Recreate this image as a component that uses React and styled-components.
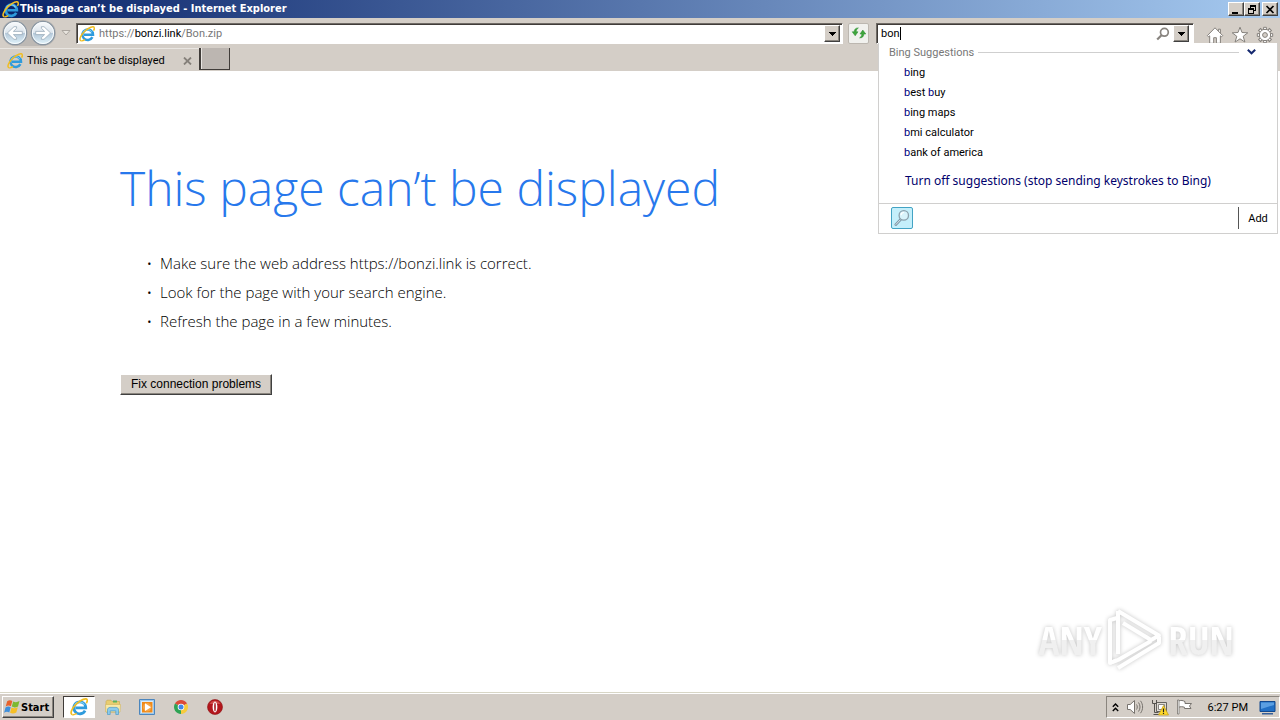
import React, { useEffect, useRef } from 'react';
import styled, { createGlobalStyle, css } from 'styled-components';

const uiFont = 'Roboto, "DejaVu Sans Condensed", sans-serif';
const linkFont = '"Noto Sans", "DejaVu Sans Condensed", sans-serif';
const boldFont = '"DejaVu Sans Condensed", "DejaVu Sans", sans-serif';
const pageFont = '"Open Sans", "Noto Sans", sans-serif';
const face = '#d4cec7';

const suggestions = ['bing', 'best buy', 'bing maps', 'bmi calculator', 'bank of america'];

const tips = [
  'Make sure the web address https://bonzi.link is correct.',
  'Look for the page with your search engine.',
  'Refresh the page in a few minutes.',
];

const GlobalStyle = createGlobalStyle`
  * {
    box-sizing: border-box;
  }

  body {
    margin: 0;
    background: #fff;
    font-family: ${uiFont};
    font-size: 11px;
    color: #000;
  }

  button,
  input {
    margin: 0;
    padding: 0;
    border: 0;
    background: none;
    font: inherit;
    color: inherit;
  }

  svg {
    display: block;
    flex: none;
  }
`;

const raised = css`
  background: ${face};
  border: 1px solid;
  border-color: #fff #404040 #404040 #fff;
  box-shadow: inset -1px -1px 0 #8a857e;
`;

const InternetExplorerIcon = ({ size = 16 }) => (
  <svg width={size} height={size} viewBox="0 0 16 16" fill="none" aria-hidden="true">
    <path
      d="M13.400 11.200A5.300 5.300 0 1 1 14 8.700H5"
      stroke="#2f9bdc"
      strokeWidth="2.500"
    />
    <path d="M4 7.200A4.800 4.800 0 0 1 12.800 6" stroke="#8ad6f7" strokeWidth="1" />
    <path
      d="M2.300 14.800C-.6 14.400 1.600 8.900 6 5 10 1.400 14.400-.3 15.200 1.500c.4.800 0 2-.7 3.100"
      stroke="#f0bd22"
      strokeWidth="1.500"
    />
    <path d="M2.300 14.800c1 .2 2.300-.3 3.600-1.100" stroke="#f0bd22" strokeWidth="1.400" />
  </svg>
);

const ArrowButtonIcon = ({ forward }) => (
  <svg width="26" height="26" viewBox="0 0 26 26" aria-hidden="true">
    <defs>
      <linearGradient id={forward ? 'orbForward' : 'orbBack'} x1="0" y1="0" x2="0" y2="1">
        <stop offset="0" stopColor="#fbfcfd" />
        <stop offset=".48" stopColor="#dbe4ec" />
        <stop offset=".52" stopColor="#b4c8d9" />
        <stop offset="1" stopColor="#e3f5fc" />
      </linearGradient>
    </defs>
    <circle
      cx="13"
      cy="13"
      r="11.7"
      fill={`url(#${forward ? 'orbForward' : 'orbBack'})`}
      stroke="#8995a1"
      strokeWidth="1.2"
    />
    <circle cx="13" cy="13" r="10.6" fill="none" stroke="#f7fbfd" />
    <path
      d="M5.4 13l6.6-6.3h2.6v1.6l-3.2 3.1h8.9v3.2h-8.9l3.2 3.1v1.6H12z"
      fill="#fff"
      stroke="#9aacba"
      strokeWidth=".8"
      transform={forward ? 'matrix(-1 0 0 1 26 0)' : undefined}
    />
  </svg>
);

const DownArrow = () => (
  <svg width="7" height="4" viewBox="0 0 7 4" shapeRendering="crispEdges" aria-hidden="true">
    <path d="M0 0h7v1H6v1H5v1H4v1H3V3H2V2H1V1H0z" fill="#000" />
  </svg>
);

const RefreshIcon = () => (
  <svg width="16" height="16" viewBox="0 0 16 16" fill="#3fa63c" stroke="#258a2c" strokeWidth=".5" aria-hidden="true">
    <path d="M1.200 6.800L4.200 10.800 7 6.800H5.200c0-1.700.6-2.800 2.200-3.900-2.600-.1-4.100 1.200-4.300 3.900z" />
    <path d="M14.800 9L11.800 5 9 9h1.800c0 1.700-.6 2.800-2.200 3.900 2.600.1 4.100-1.200 4.300-3.900z" />
  </svg>
);

const SearchIcon = () => (
  <svg width="14" height="14" viewBox="0 0 14 14" fill="none" stroke="#88847f" aria-hidden="true">
    <circle cx="8.4" cy="5.3" r="3.9" strokeWidth="1.7" />
    <path d="M5.5 8.2L1.2 12.6" strokeWidth="2.2" />
  </svg>
);

const HomeIcon = () => (
  <svg width="18" height="18" viewBox="0 0 18 18" fill="#fff" stroke="#85817c" aria-hidden="true">
    <path d="M12.4 3.2h2v4h-2z" />
    <path d="M9 1.8L1.4 9.6l1.2 1.2 1.1-1v7.5h4v-5.6h2.7v5.6h4V9.8l1.1 1 1.2-1.2z" />
  </svg>
);

const StarIcon = () => (
  <svg width="18" height="18" viewBox="0 0 18 18" fill="#fff" stroke="#85817c" aria-hidden="true">
    <path d="M9 1.2l2 5.3 5.8.3-4.6 3.5 1.7 5.7L9 12.8 4.1 16l1.7-5.7L1.2 6.8l5.8-.3z" />
  </svg>
);

const gearAngles = [0, 45, 90, 135, 180, 225, 270, 315];

const GearIcon = () => (
  <svg width="18" height="18" viewBox="0 0 18 18" fill="#fff" stroke="#85817c" aria-hidden="true">
    {gearAngles.map(angle => (
      <path key={angle} d="M7.6 4V1.3h2.8V4" transform={`rotate(${angle} 9 9)`} />
    ))}
    <circle cx="9" cy="9" r="5.6" />
    <circle cx="9" cy="9" r="5" stroke="none" />
    <circle cx="9" cy="9" r="2.4" fill={face} />
  </svg>
);

const MagnifierIcon = () => (
  <svg width="18" height="18" viewBox="0 0 18 18" fill="none" aria-hidden="true">
    <path d="M7.7 10.4L2.8 15.6" stroke="#7f99a8" strokeWidth="2.8" strokeLinecap="round" />
    <path d="M7.5 10.6L3 15.4" stroke="#d9e6ec" strokeWidth="1" strokeLinecap="round" />
    <circle cx="10.8" cy="6.4" r="4.7" fill="#d8f3fb" stroke="#8ba0ad" strokeWidth="1.3" />
    <path d="M8 6.2a3 3 0 0 1 3-2.7" stroke="#fff" strokeWidth="1.2" />
  </svg>
);

const WindowsFlag = () => (
  <svg width="17" height="16" viewBox="0 0 17 16" aria-hidden="true">
    <path d="M3.2 2.2C5 1 6.700 1 8.300 2L6.900 7.300C5.200 6.300 3.500 6.400 1.700 7.500z" fill="#e8622b" />
    <path d="M9.200 2.400c1.900 1.100 3.900 1 6.300-.3l-1.500 5.300c-2.200 1.300-4.300 1.300-6.200.2z" fill="#7db92f" />
    <path d="M1.500 8.400c1.800-1.100 3.500-1.200 5.200-.2l-1.400 5.300c-1.700-1-3.400-.9-5.200.2z" fill="#3f8fdb" />
    <path d="M7.500 8.600c1.900 1.100 4 1 6.300-.3l-1.500 5.300c-2.300 1.300-4.300 1.300-6.200.2z" fill="#f6bf25" />
  </svg>
);

const FolderIcon = () => (
  <svg width="18" height="18" viewBox="0 0 18 18" aria-hidden="true">
    <path d="M2 3.500l1-1.300h4l1 1.300h7.500V14H2z" fill="#e9cd70" stroke="#c9a847" strokeWidth=".6" />
    <path d="M9 2.500h4v2H9z" fill="#5bb25f" />
    <path d="M1.500 6.500h15L16 14H2z" fill="#f8e9a8" stroke="#d2b65b" strokeWidth=".6" />
    <path d="M3.500 16.500V12c0-1.700 1-2.600 2.500-2.600h6c1.500 0 2.500.9 2.500 2.600v4.500h-2.700v-3.600H6.200v3.600z" fill="#8ccbec" stroke="#4f9bc7" strokeWidth=".7" />
  </svg>
);

const MediaPlayerIcon = () => (
  <svg width="17" height="17" viewBox="0 0 17 17" aria-hidden="true">
    <path d="M.5.500h15v15H.5z" fill="#9dc9ed" stroke="#4c86bd" />
    <path d="M2 2h12v12H2z" fill="#dcebf7" />
    <path d="M3 3h10.500v10.500H3z" fill="#f08a18" />
    <circle cx="8.200" cy="8.200" r="4.200" fill="#f6a648" />
    <path d="M6 4.300l6 3.900-6 3.900z" fill="#fff" />
  </svg>
);

const ChromeIcon = () => (
  <svg width="14" height="14" viewBox="0 0 14 14" aria-hidden="true">
    <path d="M7 7L.94 3.500A7 7 0 0 1 13.060 3.500z" fill="#dc4a38" />
    <path d="M7 7l6.060-3.500A7 7 0 0 1 7 14z" fill="#f7cb3c" />
    <path d="M7 7v7A7 7 0 0 1 .94 3.500z" fill="#2ea354" />
    <circle cx="7" cy="7" r="3.300" fill="#fff" />
    <circle cx="7" cy="7" r="2.500" fill="#4287e8" />
  </svg>
);

const OperaIcon = () => (
  <svg width="16" height="16" viewBox="0 0 16 16" aria-hidden="true">
    <circle cx="8" cy="8" r="7.500" fill="#b3161c" stroke="#8d1013" strokeWidth=".6" />
    <path d="M2.500 5a6.200 6.200 0 0 1 11 0z" fill="#cf4a48" />
    <ellipse cx="8" cy="8" rx="2.400" ry="5.400" fill="#fff" />
    <ellipse cx="8" cy="8" rx=".8" ry="4.500" fill="#a3141a" />
  </svg>
);

const SpeakerIcon = () => (
  <svg width="18" height="16" viewBox="0 0 18 16" fill="none" stroke="#77736e" aria-hidden="true">
    <path d="M1.500 5.500h2.700L8.500 1.500v13l-4.300-4H1.500z" fill="#fff" />
    <path d="M10.500 5.500c1 1.500 1 3.500 0 5M12.500 3.500c2 2.700 2 6.300 0 9M14.500 1.800c2.800 3.700 2.800 8.700 0 12.400" />
  </svg>
);

const NetworkIcon = () => (
  <svg width="18" height="17" viewBox="0 0 18 17" fill="none" aria-hidden="true">
    <path d="M5.500 3.500h10v9h-10z" fill="#dedbd5" stroke="#65625e" />
    <path d="M7.500 5.500h6v5h-6z" fill="#fff" stroke="#8a8782" />
    <path d="M1.500 1v3.500h4V1M3.500 4.500v9h4M2.500 15.500h6" stroke="#55524e" />
    <path d="M12.500 6.500l5 9.500h-10z" fill="#ffd92b" stroke="#c29b16" strokeWidth=".7" />
    <path d="M12.500 9.500v3.400M12.500 13.700v1.300" stroke="#222" strokeWidth="1.200" />
  </svg>
);

const FlagIcon = () => (
  <svg width="17" height="16" viewBox="0 0 17 16" aria-hidden="true">
    <path d="M2.500 2c2.500-1 4.500-.6 6.500.6v1.900h6.500l-2 2.500 1.500 2.500H8.500V8.300c-2-.8-4-.8-6 0z" fill="#fff" stroke="#77736e" />
    <path d="M1.500 1h1.500v14H1.500z" fill="#fff" stroke="#77736e" strokeWidth=".8" />
  </svg>
);

const DesktopIcon = () => (
  <svg width="17" height="15" viewBox="0 0 17 15" aria-hidden="true">
    <path d="M1 1.500h15v10H1z" fill="#2270c5" stroke="#12488e" />
    <path d="M2 2.500h13v2.500L2 9z" fill="#5b9fe2" />
    <path d="M3 13h11v1.500H3z" fill="#355f99" />
  </svg>
);

const PlayLogo = () => (
  <svg width="58" height="64" viewBox="0 0 58 64" fill="none" stroke="#fff" strokeWidth="4" aria-hidden="true">
    <path d="M12 3v43M12 3l41 24.500-8 4.500L17 15" strokeLinejoin="round" />
    <path d="M11 10l-7 2v43l7-3" strokeLinejoin="round" />
    <path d="M4 55l8-3 33-19M12 60l41-25v-6" strokeLinejoin="round" />
  </svg>
);

// The letters typed by the user are tinted wherever a word starts with them.
const SuggestionText = ({ text }) =>
  text.split(' ').map((word, index) => (
    <React.Fragment key={word}>
      {index > 0 && ' '}
      {word.startsWith('b') ? (
        <>
          <Match>b</Match>
          {word.slice(1)}
        </>
      ) : (
        word
      )}
    </React.Fragment>
  ));

const SearchField = () => {
  const input = useRef(null);

  useEffect(() => {
    input.current.focus();
    input.current.setSelectionRange(3, 3);
  }, []);

  return (
    <SearchWrapper>
      <SearchFrame>
        <SearchLabel>
          <SearchInput ref={input} aria-label="Search" defaultValue="bon" />
        </SearchLabel>
        <IconButton aria-label="Search">
          <SearchIcon />
        </IconButton>
        <DropButton aria-label="Search providers">
          <DownArrow />
        </DropButton>
      </SearchFrame>
      <SuggestionPanel>
        <SuggestionHeader>
          <span>Bing Suggestions</span>
          <hr />
          <button aria-label="Collapse suggestions">
            <svg width="9" height="6" viewBox="0 0 9 6" aria-hidden="true">
              <path d="M.8.800l3.700 3.500L8.200.800" fill="none" stroke="#14286e" strokeWidth="2" />
            </svg>
          </button>
        </SuggestionHeader>
        <SuggestionList>
          {suggestions.map(text => (
            <li key={text}>
              <a href="#search">
                <SuggestionText text={text} />
              </a>
            </li>
          ))}
        </SuggestionList>
        <TurnOffLink href="#suggestions">
          Turn off suggestions (stop sending keystrokes to Bing)
        </TurnOffLink>
        <SuggestionFooter>
          <ProviderButton aria-label="Bing">
            <MagnifierIcon />
          </ProviderButton>
          <AddButton>Add</AddButton>
        </SuggestionFooter>
      </SuggestionPanel>
    </SearchWrapper>
  );
};

const App = () => (
  <Screen>
    <GlobalStyle />
    <TitleBar>
      <InternetExplorerIcon size={17} />
      <h1>This page can’t be displayed - Internet Explorer</h1>
      <WindowButtons>
        <WindowButton aria-label="Minimize">
          <svg width="10" height="9" viewBox="0 0 10 9" shapeRendering="crispEdges">
            <path d="M1 7h6v2H1z" />
          </svg>
        </WindowButton>
        <WindowButton aria-label="Restore">
          <svg width="10" height="9" viewBox="0 0 10 9" shapeRendering="crispEdges">
            <path d="M3 0h6v6H7V5h1V2H4v1H3zM1 3h6v6H1zM2 5v3h4V5z" fillRule="evenodd" />
          </svg>
        </WindowButton>
        <WindowButton aria-label="Close" $apart>
          <svg width="10" height="9" viewBox="0 0 10 9">
            <path d="M1.500 1l7 7M8.500 1l-7 7" stroke="#000" strokeWidth="1.700" />
          </svg>
        </WindowButton>
      </WindowButtons>
    </TitleBar>
    <NavigationBar>
      <HistoryButtons>
        <button aria-label="Back">
          <ArrowButtonIcon />
        </button>
        <button aria-label="Forward">
          <ArrowButtonIcon forward />
        </button>
      </HistoryButtons>
      <IconButton aria-label="Recent pages">
        <svg width="10" height="6" viewBox="0 0 10 6" aria-hidden="true">
          <path d="M1 .5h8L5 5z" fill="#e8e4de" stroke="#aaa59f" />
        </svg>
      </IconButton>
      <AddressFrame>
        <InternetExplorerIcon />
        <AddressField>
          <input aria-label="Address" defaultValue="https://bonzi.link/Bon.zip" />
          <span aria-hidden="true">
            https://<b>bonzi.link</b>/Bon.zip
          </span>
        </AddressField>
        <DropButton aria-label="Show address history">
          <DownArrow />
        </DropButton>
      </AddressFrame>
      <RefreshButton aria-label="Refresh">
        <RefreshIcon />
      </RefreshButton>
      <SearchField />
      <ToolButtons>
        <button aria-label="Home">
          <HomeIcon />
        </button>
        <button aria-label="Favorites">
          <StarIcon />
        </button>
        <button aria-label="Tools">
          <GearIcon />
        </button>
      </ToolButtons>
    </NavigationBar>
    <TabBar>
      <Tab>
        <InternetExplorerIcon />
        <span>This page can’t be displayed</span>
        <button aria-label="Close tab">
          <svg width="9" height="8" viewBox="0 0 9 8" aria-hidden="true">
            <path d="M1 .5l7 7M8 .5l-7 7" stroke="#85807a" strokeWidth="1.800" />
          </svg>
        </button>
      </Tab>
      <NewTabButton aria-label="New tab" />
    </TabBar>
    <Content>
      <h2>This page can’t be displayed</h2>
      <ul>
        {tips.map(tip => (
          <li key={tip}>{tip}</li>
        ))}
      </ul>
      <FixButton>Fix connection problems</FixButton>
      <Watermark>
        <span>ANY</span>
        <PlayLogo />
        <span>RUN</span>
      </Watermark>
    </Content>
    <TaskBar>
      <StartButton>
        <WindowsFlag />
        Start
      </StartButton>
      <TaskButton aria-label="Internet Explorer" $active>
        <InternetExplorerIcon size={18} />
      </TaskButton>
      <TaskButton aria-label="Windows Explorer">
        <FolderIcon />
      </TaskButton>
      <TaskButton aria-label="Media Player">
        <MediaPlayerIcon />
      </TaskButton>
      <TaskButton aria-label="Chrome">
        <ChromeIcon />
      </TaskButton>
      <TaskButton aria-label="Opera">
        <OperaIcon />
      </TaskButton>
      <Tray>
        <svg width="7" height="9" viewBox="0 0 7 9" fill="none" stroke="#000" strokeWidth="1.400" aria-hidden="true">
          <path d="M.8 3.800l2.700-2.700 2.700 2.700M.8 8l2.700-2.700L6.200 8" />
        </svg>
        <SpeakerIcon />
        <NetworkIcon />
        <FlagIcon />
        <time>6:27 PM</time>
        <DesktopIcon />
      </Tray>
    </TaskBar>
  </Screen>
);

const Screen = styled.div`
  display: flex;
  flex-direction: column;
  min-height: 100vh;
`;

const TitleBar = styled.header`
  display: flex;
  align-items: center;
  gap: 1px;
  height: 18px;
  padding: 0 2px;
  background: linear-gradient(90deg, #0a246a, #a6caf0);
  color: #fff;

  h1 {
    flex: 1;
    margin: 0;
    font-family: ${boldFont};
    font-size: 11px;
    font-weight: 700;
    line-height: 18px;
  }
`;

const WindowButtons = styled.div`
  display: flex;
`;

const WindowButton = styled.button`
  ${raised}
  display: flex;
  align-items: center;
  justify-content: center;
  width: 16px;
  height: 14px;
  margin-left: ${props => (props.$apart ? '2px' : '0')};
`;

const NavigationBar = styled.nav`
  display: flex;
  align-items: center;
  height: 30px;
  padding: 0 6px 0 2px;
  background: ${face};
`;

const HistoryButtons = styled.div`
  display: flex;
  gap: 2px;
  border-radius: 13px;
  background: #bdb9b5;
`;

const IconButton = styled.button`
  display: flex;
  align-items: center;
  justify-content: center;
  width: 20px;
  height: 18px;
`;

const FieldFrame = styled.div`
  display: flex;
  align-items: center;
  height: 21px;
  padding: 1px 2px 0 2px;
  background: #fff;
  border: 1px solid;
  border-color: #6f6a65 #fff #fff #6f6a65;
  box-shadow: inset 1px 1px 0 #403c39;
`;

const AddressFrame = styled(FieldFrame)`
  flex: 1;
`;

const SearchFrame = styled(FieldFrame)`
  padding: 1px 4px 0 4px;
`;

const AddressField = styled.label`
  position: relative;
  flex: 1;
  height: 16px;
  margin-left: 4px;
  line-height: 16px;
  color: #777;

  input {
    width: 100%;
    height: 16px;
    color: transparent;
    outline: none;
  }

  span {
    position: absolute;
    left: 0;
    top: 0;
    pointer-events: none;
  }

  b {
    font-weight: 400;
    color: #000;
  }
`;

const DropButton = styled.button`
  ${raised}
  display: flex;
  align-items: center;
  justify-content: center;
  width: 16px;
  height: 17px;
`;

const RefreshButton = styled.button`
  display: flex;
  align-items: center;
  justify-content: center;
  width: 21px;
  height: 21px;
  margin: 0 7px 0 5px;
  background: #f1f1ee;
  border: 1px solid #bcb7b0;
  border-radius: 2px;
`;

const SearchWrapper = styled.div`
  position: relative;
  width: 318px;
`;

const SearchLabel = styled.label`
  display: flex;
  flex: 1;
  align-items: center;
  height: 17px;
`;

const SearchInput = styled.input`
  field-sizing: content;
  height: 13px;
  border-right: 1px solid #000;
  outline: none;
  line-height: 13px;
  caret-color: transparent;
`;

const SuggestionPanel = styled.section`
  position: absolute;
  top: 20px;
  left: 2px;
  z-index: 1;
  width: 400px;
  background: #fff;
  border: 1px solid #d0cfce;
  border-top: 0;
`;

const SuggestionHeader = styled.div`
  display: flex;
  align-items: center;
  height: 19px;
  padding: 0 21px 0 10px;
  color: #777;

  hr {
    flex: 1;
    height: 1px;
    margin: 0 8px 0 4px;
    border: 0;
    background: #cfcfcf;
  }
`;

const SuggestionList = styled.ul`
  margin: 0;
  padding: 1px 0 0 25px;
  list-style: none;
  line-height: 20px;

  a {
    color: #000;
    text-decoration: none;
  }
`;

const Match = styled.span`
  color: #00007c;
`;

const TurnOffLink = styled.a`
  display: block;
  padding: 7px 0 11px 26px;
  font-family: ${linkFont};
  font-size: 12px;
  line-height: 22px;
  color: #00006c;
  text-decoration: none;
`;

const SuggestionFooter = styled.div`
  display: flex;
  align-items: center;
  justify-content: space-between;
  height: 30px;
  padding-left: 12px;
  border-top: 1px solid #d0cfce;
`;

const ProviderButton = styled.button`
  display: flex;
  align-items: center;
  justify-content: center;
  width: 22px;
  height: 22px;
  background: #c4effb;
  border: 1px solid #43a3c4;
  border-radius: 2px;
`;

const AddButton = styled.button`
  width: 39px;
  height: 22px;
  border-left: 1px solid #555;
`;

const ToolButtons = styled.div`
  display: flex;
  gap: 7px;
  margin-left: 12px;
  padding-top: 3px;
`;

const TabBar = styled.div`
  display: flex;
  height: 23px;
  background: ${face};
`;

const Tab = styled.div`
  display: flex;
  align-items: center;
  width: 199px;
  padding: 1px 7px 0 7px;
  border-top: 1px solid #e9e6e2;

  span {
    flex: 1;
    margin-left: 4px;
    white-space: nowrap;
  }
`;

const NewTabButton = styled.button`
  width: 31px;
  height: 22px;
  background: #bcb6b1;
  border: solid #403c39;
  border-width: 0 1px 1px 2px;
  box-shadow: inset 1px 0 0 #e9e6e2;
`;

const Content = styled.main`
  display: flex;
  flex: 1;
  flex-direction: column;
  align-items: flex-start;
  padding: 82px 46px 20px 120px;
  font-family: ${pageFont};

  h2 {
    margin: 0;
    font-size: 48px;
    font-weight: 300;
    line-height: 70px;
    color: #2778ec;
  }

  ul {
    margin: 26px 0 38px;
    padding-left: 40px;
    font-size: 15px;
    font-weight: 300;
    line-height: 29px;
  }

  li::marker {
    content: '•\u00a0\u00a0';
  }
`;

const FixButton = styled.button`
  ${raised}
  height: 21px;
  padding: 0 10px 2px;
  font-family: 'Liberation Sans', sans-serif;
  font-size: 12px;
`;

const Watermark = styled.div`
  display: flex;
  align-items: center;
  align-self: flex-end;
  gap: 4px;
  margin-top: auto;
  font-family: 'Liberation Sans Narrow', 'Open Sans Condensed', sans-serif;
  font-size: 39px;
  line-height: 64px;
  color: #fff;
  filter: drop-shadow(0 0 2px #c4c4c4);

  span {
    background: linear-gradient(#fff 50%, #f0f0f0 50%);
    background-clip: text;
    color: transparent;
  }
`;

const TaskBar = styled.footer`
  display: flex;
  align-items: center;
  height: 28px;
  padding: 1px 0 0 2px;
  background: ${face};
  border-top: 1px solid #d8d6c6;
  box-shadow: inset 0 1px 0 #fff;
`;

const StartButton = styled.button`
  ${raised}
  display: flex;
  align-items: center;
  height: 22px;
  margin-right: 9px;
  padding: 0 4px 0 1px;
  font-family: ${boldFont};
  font-weight: 700;
`;

const TaskButton = styled.button`
  display: flex;
  align-items: center;
  justify-content: center;
  width: 32px;
  height: 22px;
  margin-right: 2px;
  ${props =>
    props.$active &&
    css`
      background: #fff;
      border: 1px solid;
      border-color: #403c39 #fff #fff #403c39;
    `}
`;

const Tray = styled.div`
  display: flex;
  align-items: center;
  height: 22px;
  margin-left: auto;
  padding: 0 3px 0 5px;
  gap: 7px;
  border: 1px solid;
  border-color: #8a857e #fff #fff #8a857e;

  time {
    margin: 0 4px 0 8px;
  }
`;

export default App;
